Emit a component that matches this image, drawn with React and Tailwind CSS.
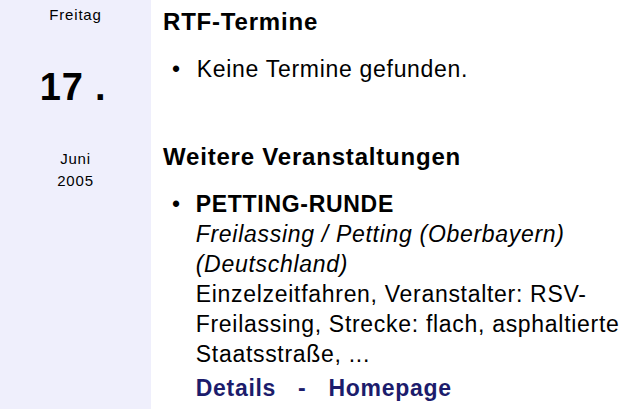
import React from 'react';

function App() {
  return (
    <div className="h-[409px] w-[640px] overflow-hidden flex bg-white text-black" style={{ fontFamily: '"Liberation Sans", Arial, sans-serif' }}>
      {/* Datum */}
      <aside className="w-[151px] shrink-0 bg-[#efeffc] flex flex-col items-center text-[15px] leading-[18px] tracking-[0.8px]">
        <div className="mt-[6px]">Freitag</div>
        <div className="mt-[41px] pr-[5px] text-[38px] leading-[44px] font-bold">17 .</div>
        <div className="mt-[41px]">Juni</div>
        <div className="mt-[4px]">2005</div>
      </aside>

      {/* Inhalt */}
      <main className="flex-1 pl-[12px] text-[23px] leading-[30px] tracking-[0.7px]">
        <h2 className="mt-[7px] text-[24px] font-bold leading-[30px] tracking-[0.8px]">RTF-Termine</h2>
        <ul className="mt-[17px] pl-[9px]">
          <li className="flex gap-[16px]">
            <span>•</span>
            <span>Keine Termine gefunden.</span>
          </li>
        </ul>
        <h2 className="mt-[58px] text-[24px] font-bold leading-[30px] tracking-[0.8px]">Weitere Veranstaltungen</h2>
        <ul className="mt-[17px] pl-[9px]">
          <li className="flex gap-[15px]">
            <span>•</span>
            <div>
              <div className="font-bold">PETTING-RUNDE</div>
              <div className="italic">Freilassing / Petting (Oberbayern)<br />(Deutschland)</div>
              <div>Einzelzeitfahren, Veranstalter: RSV-Freilassing, Strecke: flach, asphaltierte Staatsstraße, ...</div>
              <div className="font-bold text-[#1c1c6c] mt-[4px]">
                <a href="#">Details</a>
                <span className="mx-[22px]">-</span>
                <a href="#">Homepage</a>
              </div>
            </div>
          </li>
        </ul>
      </main>
    </div>
  );
}

export default App;
